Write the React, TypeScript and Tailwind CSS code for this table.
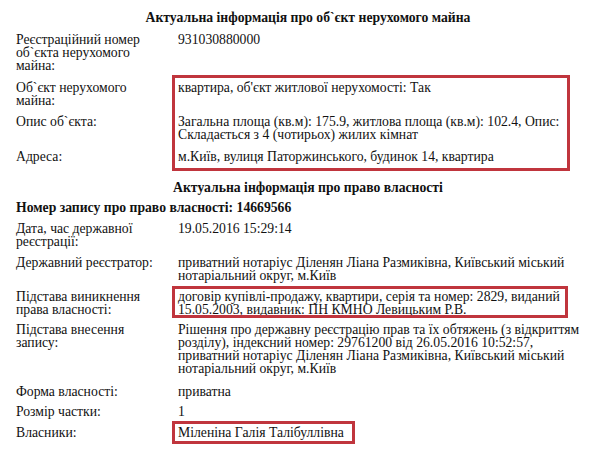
const serif = { fontFamily: '"Liberation Serif", "Times New Roman", serif' };

interface Row {
  label: string[];
  value: string[];
  pb?: string;
}

const propertyRows: Row[] = [
  { label: ['Реєстраційний номер', 'об`єкта нерухомого', 'майна:'], value: ['931030880000'], pb: 'pb-[9px]' },
  { label: ['Об`єкт нерухомого', 'майна:'], value: ['квартира, об\'єкт житлової нерухомості: Так'] },
  {
    label: ['Опис об`єкта:'],
    value: ['Загальна площа (кв.м): 175.9, житлова площа (кв.м): 102.4, Опис:', 'Складається з 4 (чотирьох) жилих кімнат'],
    pb: 'pb-[9px]',
  },
  { label: ['Адреса:'], value: ['м.Київ, вулиця Паторжинського, будинок 14, квартира'], pb: 'pb-[9px]' },
];

const rightsRows: Row[] = [
  { label: ['Дата, час державної', 'реєстрації:'], value: ['19.05.2016 15:29:14'] },
  {
    label: ['Державний реєстратор:'],
    value: ['приватний нотаріус Діленян Ліана Размиківна, Київський міський', 'нотаріальний округ, м.Київ'],
  },
  {
    label: ['Підстава виникнення', 'права власності:'],
    value: ['договір купівлі-продажу, квартири, серія та номер: 2829, виданий', '15.05.2003, видавник: ПН КМНО Левицьким Р.В.'],
    pb: 'pb-[7px]',
  },
  {
    label: ['Підстава внесення', 'запису:'],
    value: [
      'Рішення про державну реєстрацію прав та їх обтяжень (з відкриттям',
      'розділу), індексний номер: 29761200 від 26.05.2016 10:52:57,',
      'приватний нотаріус Діленян Ліана Размиківна, Київський міський',
      'нотаріальний округ, м.Київ',
    ],
    pb: 'pb-[10px]',
  },
  { label: ['Форма власності:'], value: ['приватна'], pb: 'pb-[7px]' },
  { label: ['Розмір частки:'], value: ['1'] },
  { label: ['Власники:'], value: ['Міленіна Галія Талібуллівна'] },
];

function InfoRow({ row }: { row: Row }) {
  return (
    <div className={`grid grid-cols-[162px_392px] ${row.pb ?? 'pb-[8px]'}`}>
      <div>
        {row.label.map((l, i) => (
          <div key={i} className="whitespace-nowrap">{l}</div>
        ))}
      </div>
      <div>
        {row.value.map((v, i) => (
          <div key={i} className="whitespace-nowrap">{v}</div>
        ))}
      </div>
    </div>
  );
}

export default function App() {
  return (
    <div
      style={serif}
      className="relative w-[598px] h-[462px] bg-white text-[#111] text-[13.7px] leading-[13px] pl-[16px] pt-[11px] overflow-hidden"
    >
      <div className="font-bold text-center pb-[9px] pl-[2px]">
        Актуальна інформація про об`єкт нерухомого майна
      </div>
      {propertyRows.map((r, i) => (
        <InfoRow key={i} row={r} />
      ))}

      <div className="font-bold text-center pt-[9px] pb-[7px] pl-[2px]">
        Актуальна інформація про право власності
      </div>
      <div className="font-bold pb-[8px]">Номер запису про право власності: 14669566</div>
      {rightsRows.map((r, i) => (
        <InfoRow key={i} row={r} />
      ))}

      {/* red annotation frames */}
      <div className="absolute left-[172px] top-[75px] w-[398px] h-[96px] border-[3px] border-[#c0353d]" />
      <div className="absolute left-[172px] top-[286px] w-[396px] h-[32px] border-[3px] border-[#c0353d]" />
      <div className="absolute left-[172px] top-[421px] w-[183px] h-[23px] border-[3px] border-[#c0353d]" />
    </div>
  );
}
